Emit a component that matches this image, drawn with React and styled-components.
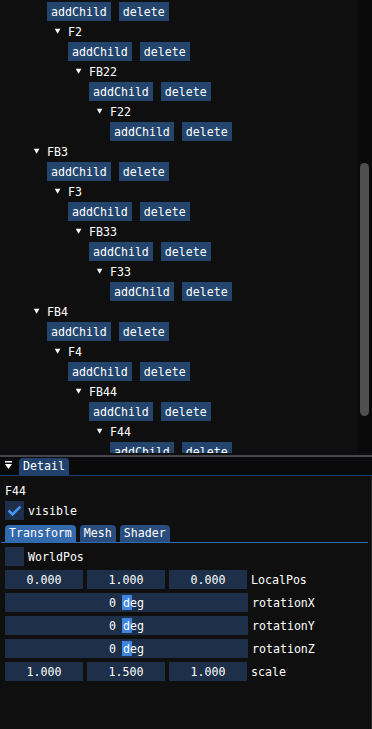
import React from "react";
import styled, { createGlobalStyle } from "styled-components";

const GlobalStyle = createGlobalStyle`
  html, body {
    margin: 0;
    padding: 0;
    background: #0f0f0f;
  }
  body {
    font-family: "DejaVu Sans Mono", "Liberation Mono", monospace;
    font-size: 11.6px;
    color: #ffffff;
  }
  * {
    box-sizing: border-box;
  }
`;

const Screen = styled.div`
  width: 372px;
  height: 729px;
  display: flex;
  flex-direction: column;
  overflow: hidden;
  background: #0f0f0f;
`;

/* ---------- scene tree ---------- */

const TreePane = styled.div`
  height: 453px;
  flex-shrink: 0;
  display: flex;
`;

const TreeList = styled.div`
  flex: 1;
  overflow: hidden;
  padding-top: 2px;
  display: flex;
  flex-direction: column;
  gap: 4px;
`;

const ScrollTrack = styled.div`
  width: 15px;
  background: #0a0a0a;
  padding: 163px 3px 0 3px;
`;

const ScrollGrab = styled.div`
  height: 253px;
  background: #4f4f4f;
  border-radius: 5px;
`;

const ButtonRow = styled.div`
  display: flex;
  gap: 8px;
  height: 19px;
  flex-shrink: 0;
  padding-left: ${(p) => p.$indent}px;
`;

const Button = styled.button`
  height: 19px;
  padding: 0 4px;
  border: none;
  background: #23456d;
  color: #ffffff;
  font: inherit;
  line-height: 20px;
  white-space: nowrap;
`;

const TreeNode = styled.div`
  display: flex;
  height: 13px;
  line-height: 14px;
  flex-shrink: 0;
  padding-left: ${(p) => p.$indent}px;
  white-space: nowrap;
`;

const Arrow = () => (
  <svg width="21" height="13" viewBox="0 0 21 13">
    <polygon points="7.8,3.7 13.4,3.7 10.6,8.8" fill="#ffffff" />
  </svg>
);

/* ---------- dock splitter / tab ---------- */

const SplitGap = styled.div`
  height: 2px;
  flex-shrink: 0;
  background: #0f0f0f;
`;

const Splitter = styled.div`
  height: 2px;
  flex-shrink: 0;
  background: #45454d;
`;

const DockBar = styled.div`
  height: 19px;
  flex-shrink: 0;
  display: flex;
  align-items: flex-end;
  padding-left: 5px;
  background: #0a0a0a;
  border-bottom: 1px solid #23426b;
`;

const MenuIcon = styled.svg`
  align-self: flex-start;
  margin-top: 4px;
  margin-right: 6px;
`;

const DockTab = styled.div`
  height: 17px;
  line-height: 17px;
  padding: 0 4px;
  background: #23426b;
  border-radius: 4px 4px 0 0;
`;

/* ---------- detail panel ---------- */

const DetailBody = styled.div`
  flex: 1;
  display: flex;
  flex-direction: column;
  gap: 4px;
  padding: 8px 4px 0 5px;
  border-right: 1px solid #26262b;
`;

const Title = styled.div`
  height: 13px;
  line-height: 14px;
`;

const CheckRow = styled.div`
  display: flex;
  align-items: center;
  gap: 4px;
  height: 19px;
  line-height: 20px;
`;

const CheckBox = styled.div`
  width: 19px;
  height: 19px;
  background: #1d2f49;
`;

const TabBar = styled.div`
  display: flex;
  align-items: flex-end;
  gap: 4px;
  height: 19px;
  width: 367px;
  margin-left: -4px;
  padding-left: 4px;
  border-bottom: 1px solid #3369ad;
`;

const Tab = styled.div`
  height: 17px;
  line-height: 17px;
  padding: 0 4px;
  border-radius: 4px 4px 0 0;
  background: ${(p) => (p.$active ? "#3369ad" : "#294d7e")};
`;

const FieldRow = styled.div`
  display: flex;
  align-items: center;
  gap: 4px;
  height: 19px;
  line-height: 20px;
`;

const NumField = styled.div`
  width: 78px;
  height: 19px;
  background: #1d2f49;
  text-align: center;
`;

const Slider = styled.div`
  position: relative;
  width: 243px;
  height: 19px;
  background: #1d2f49;
  text-align: center;
`;

const SliderGrab = styled.div`
  position: absolute;
  top: 2px;
  bottom: 2px;
  width: 10px;
  background: #3d85e0;
`;

const SliderText = styled.span`
  position: relative;
  white-space: pre;
`;

const Label = styled.span`
  white-space: nowrap;
`;

const tree = [
  ["b", 2],
  ["n", 2, "F2"],
  ["b", 3],
  ["n", 3, "FB22"],
  ["b", 4],
  ["n", 4, "F22"],
  ["b", 5],
  ["n", 1, "FB3"],
  ["b", 2],
  ["n", 2, "F3"],
  ["b", 3],
  ["n", 3, "FB33"],
  ["b", 4],
  ["n", 4, "F33"],
  ["b", 5],
  ["n", 1, "FB4"],
  ["b", 2],
  ["n", 2, "F4"],
  ["b", 3],
  ["n", 3, "FB44"],
  ["b", 4],
  ["n", 4, "F44"],
  ["b", 5],
];

const indentOf = (level) => 5 + level * 21;

const Check = () => (
  <CheckBox>
    <svg width="19" height="19" viewBox="0 0 19 19">
      <polyline
        points="3.65,9.5 7.55,13.4 15.35,5.6"
        fill="none"
        stroke="#4296fa"
        strokeWidth="2.6"
      />
    </svg>
  </CheckBox>
);

const RotSlider = ({ value, label }) => {
  const t = (value + 180) / 360;
  const left = 2 + (243 - 4 - 10) * t;
  return (
    <FieldRow>
      <Slider>
        <SliderGrab style={{ left }} />
        <SliderText>{`${value} deg`}</SliderText>
      </Slider>
      <Label>{label}</Label>
    </FieldRow>
  );
};

const Vec3 = ({ values, label }) => (
  <FieldRow>
    {values.map((v, i) => (
      <NumField key={i}>{v}</NumField>
    ))}
    <Label>{label}</Label>
  </FieldRow>
);

export default function App() {
  return (
    <Screen>
      <GlobalStyle />
      <TreePane>
        <TreeList>
          {tree.map(([kind, level, name], i) =>
            kind === "b" ? (
              <ButtonRow key={i} $indent={indentOf(level)}>
                <Button>addChild</Button>
                <Button>delete</Button>
              </ButtonRow>
            ) : (
              <TreeNode key={i} $indent={indentOf(level)}>
                <Arrow />
                {name}
              </TreeNode>
            )
          )}
        </TreeList>
        <ScrollTrack>
          <ScrollGrab />
        </ScrollTrack>
      </TreePane>
      <SplitGap />
      <Splitter />
      <DockBar>
        <MenuIcon width="8" height="9" viewBox="0 0 8 9">
          <rect x="0" y="0" width="7" height="1.5" fill="#ffffff" />
          <polygon points="0,3 7,3 3.5,8" fill="#ffffff" />
        </MenuIcon>
        <DockTab>Detail</DockTab>
      </DockBar>
      <DetailBody>
        <Title>F44</Title>
        <CheckRow>
          <Check />
          visible
        </CheckRow>
        <TabBar>
          <Tab $active>Transform</Tab>
          <Tab>Mesh</Tab>
          <Tab>Shader</Tab>
        </TabBar>
        <CheckRow>
          <CheckBox />
          WorldPos
        </CheckRow>
        <Vec3 values={["0.000", "1.000", "0.000"]} label="LocalPos" />
        <RotSlider value={0} label="rotationX" />
        <RotSlider value={0} label="rotationY" />
        <RotSlider value={0} label="rotationZ" />
        <Vec3 values={["1.000", "1.500", "1.000"]} label="scale" />
      </DetailBody>
    </Screen>
  );
}
